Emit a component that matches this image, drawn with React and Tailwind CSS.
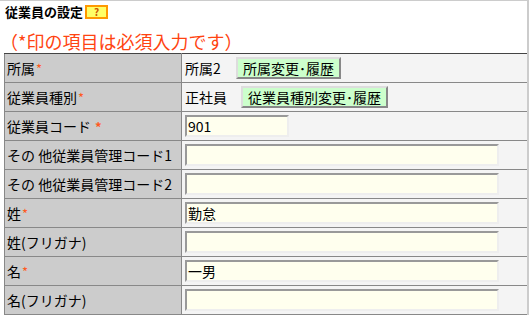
import React from 'react';

const font = { fontFamily: '"Noto Sans CJK JP", "Noto Sans", sans-serif' };

const Req = ({ bold }) => (
  <span className={`text-[#ff5a1f] text-[13px] ${bold ? 'font-bold ml-[4px]' : 'ml-[1px]'}`}>*</span>
);

const Input = ({ value = '', wide = true }) => (
  <div
    className={`${wide ? 'w-[314px]' : 'w-[104px]'} h-[22px] bg-[#ffffee] border-2 border-t-[#999999] border-l-[#999999] border-b-[#eeeeee] border-r-[#eeeeee] px-[1px] text-[14px] leading-[18px] text-black`}
  >
    {value}
  </div>
);

const Btn = ({ children }) => (
  <span className="inline-flex items-center h-[22px] px-[5px] bg-[#ccffcc] border-2 border-t-[#dddddd] border-l-[#dddddd] border-b-[#888888] border-r-[#888888] text-[14px] leading-[18px] text-black">
    {children}
  </span>
);

const rows = [
  { label: '所属', req: true, value: <div className="flex items-center"><span className="w-[51px]">所属2</span><Btn>所属変更･履歴</Btn></div> },
  { label: '従業員種別', req: true, value: <div className="flex items-center"><span className="w-[56px]">正社員</span><Btn>従業員種別変更･履歴</Btn></div> },
  { label: '従業員コード', req: true, bold: true, value: <Input value="901" wide={false} /> },
  { label: 'その 他従業員管理コード1', value: <Input /> },
  { label: 'その 他従業員管理コード2', value: <Input /> },
  { label: '姓', req: true, value: <Input value="勤怠" /> },
  { label: '姓(フリガナ)', value: <Input /> },
  { label: '名', req: true, value: <Input value="一男" /> },
  { label: '名(フリガナ)', value: <Input /> },
];

export default function App() {
  return (
    <div style={font} className="w-[529px] h-[315px] overflow-hidden bg-white border-t border-t-[#cccccc] border-r-2 border-r-[#cccccc] text-black">
      <div className="pl-[5px] pt-[2px] h-[20px] flex items-center gap-[2px]">
        <span className="text-[13px] font-bold leading-[16px]">従業員の設定</span>
        <span className="inline-flex items-center justify-center w-[23px] h-[14px] bg-[#ffff66] border-2 border-[#ff9900] text-[#cc5500] text-[10px] font-bold leading-none">?</span>
      </div>
      <div className="mt-[8px] h-[24px] text-[18px] leading-[24px] text-[#ff4411]">
        （*印の項目は必須入力です）
      </div>
      <table className="ml-[4px] w-[523px] border-collapse">
        <tbody>
          {rows.map((r, i) => (
            <tr key={i} className="h-[29px]">
              <td className={`w-[177px] bg-[#cccccc] pl-[2px] text-[14px] leading-[18px] border border-[#888888] ${i === 0 ? 'border-t-[#444444]' : ''}`}>
                {r.label}
                {r.req && <Req bold={r.bold} />}
              </td>
              <td className={`bg-[#f4f4f4] pl-[3px] text-[14px] leading-[18px] border border-[#888888] border-r-0 ${i === 0 ? 'border-t-[#444444]' : ''}`}>
                {r.value}
              </td>
            </tr>
          ))}
        </tbody>
      </table>
    </div>
  );
}
